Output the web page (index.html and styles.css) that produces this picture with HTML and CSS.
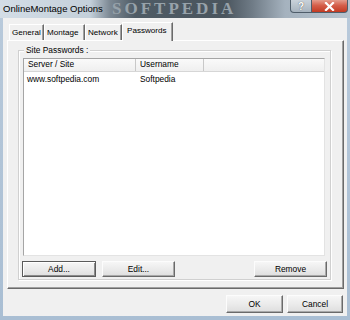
FILE: index.html
```html
<!DOCTYPE html>
<html>
<head>
<meta charset="utf-8">
<title>OnlineMontage Options</title>
<link rel="stylesheet" href="styles.css">
</head>
<body>
<div class="window">
  <div class="titlebar">
    <span class="title">OnlineMontage Options</span>
    <span class="wm-title">SOFTPEDIA</span>
    <div class="caption-btns">
      <div class="cap help">?</div>
      <div class="cap close">
        <svg width="11" height="9" viewBox="0 0 11 9"><path d="M2 1 L9 8 M9 1 L2 8" stroke="#fff" stroke-width="2.2" stroke-linecap="square"/></svg>
      </div>
    </div>
  </div>
  <div class="client">
    <div class="tabctrl">
      <div class="tabstrip">
        <div class="tab t-general">General</div>
        <div class="tab t-montage">Montage</div>
        <div class="tab t-network">Network</div>
        <div class="tab active">Passwords</div>
      </div>
      <div class="pane">
        <div class="group">
          <div class="legend">Site Passwords :</div>
          <div class="list">
            <div class="lrow header">
              <div class="col c1">Server / Site</div>
              <div class="col c2">Username</div>
              <div class="col c3"></div>
            </div>
            <div class="lrow item">
              <div class="col c1">www.softpedia.com</div>
              <div class="col c2">Softpedia</div>
            </div>
          </div>
          <div class="btnrow">
            <div class="btn default w-add">Add...</div>
            <div class="btn w-edit">Edit...</div>
            <div class="spacer"></div>
            <div class="btn w-remove">Remove</div>
          </div>
        </div>
      </div>
    </div>
    <div class="footer">
      <div class="btn w-ok">OK</div>
      <div class="btn w-cancel">Cancel</div>
    </div>
  </div>
</div>
</body>
</html>
```

FILE: styles.css
```css
html, body {
  margin: 0;
  padding: 0;
  background: #a8bcd2;
}
.window {
  width: 350px;
  height: 320px;
  position: relative;
  overflow: hidden;
  font-family: "Liberation Sans", Arial, sans-serif;
  font-size: 8.4px;
  color: #000;
  background: linear-gradient(to bottom, #b9cadb 0%, #a9bed3 100%);
}
.titlebar {
  height: 18px;
  position: relative;
  overflow: hidden;
  background: linear-gradient(to right, #d3dde6 0px, #c4d0da 90px, #7c8893 110px, #4f5b65 135px, #4a555e 225px, #6f7b86 252px, #a5b2be 285px, #b7c4cf 350px);
  display: flex;
  align-items: center;
}
.title {
  font-size: 9.5px;
  padding-left: 3px;
  margin-top: -1px;
  color: #000;
  position: relative;
  z-index: 2;
}
.wm-title {
  position: absolute;
  left: 112px;
  top: 0;
  line-height: 17px;
  font-family: "Liberation Serif", serif;
  font-weight: bold;
  font-size: 17px;
  letter-spacing: 3px;
  color: #97a2aa;
}
.caption-btns {
  position: absolute;
  right: 2px;
  top: 0;
  display: flex;
}
.cap {
  height: 13px;
  border: 1px solid #4f5d6a;
  border-top: none;
  box-sizing: border-box;
  display: flex;
  align-items: center;
  justify-content: center;
}
.help {
  width: 22px;
  border-radius: 0 0 0 4px;
  background: linear-gradient(to bottom, #c9d2da, #a7b3be);
  color: #fff;
  font-weight: bold;
  font-size: 10px;
  text-shadow: 0 0 1px #333;
}
.close {
  width: 36px;
  border-left: none;
  border-radius: 0 0 4px 0;
  background: linear-gradient(to bottom, #e49c8c 0%, #d55f4a 45%, #c23a22 100%);
}
.client {
  margin: 0 3px;
  height: 298px;
  background: #f0f0f0;
  padding: 4px 3px 0 4px;
  box-sizing: border-box;
  display: flex;
  flex-direction: column;
}
.tabctrl {
  display: flex;
  flex-direction: column;
}
.tabstrip {
  height: 18px;
  display: flex;
  align-items: flex-end;
  padding-left: 2px;
  position: relative;
  z-index: 2;
}
.tab {
  height: 16px;
  box-sizing: border-box;
  border-left: 1px solid #fff;
  border-top: 1px solid #fff;
  border-right: 1px solid #6a6a6a;
  box-shadow: inset -1px 0 0 #a0a0a0;
  padding: 3px 0 0 2px;
  font-size: 8.1px;
  white-space: nowrap;
}
.t-general { width: 35px; }
.t-montage { width: 41px; }
.t-network { width: 37px; }
.tab.active {
  width: 51px;
  height: 19px;
  margin-bottom: -1px;
  background: #f0f0f0;
  padding-top: 3px;
  padding-left: 4px;
}
.pane {
  height: 249px;
  box-sizing: border-box;
  border-top: 1px solid #fff;
  border-left: 1px solid #fff;
  border-right: 1px solid #6a6a6a;
  border-bottom: 1px solid #6a6a6a;
  box-shadow: inset -1px -1px 0 #a0a0a0;
  padding: 9px 0 0 10px;
}
.group {
  width: 313px;
  height: 230px;
  box-sizing: border-box;
  border: 1px solid #d0d0d0;
  box-shadow: inset 1px 1px 0 #fff, 1px 1px 0 #fff;
  padding: 0 0 0 4px;
  display: flex;
  flex-direction: column;
}
.legend {
  align-self: flex-start;
  margin: -6px 0 0 1px;
  padding: 0 2px;
  background: #f0f0f0;
  line-height: 10px;
  height: 10px;
}
.list {
  margin-top: 3px;
  width: 302px;
  height: 198px;
  box-sizing: border-box;
  background: #fff;
  border: 1px solid #a5a5a5;
  border-right-color: #e3e3e3;
  border-bottom-color: #e3e3e3;
}
.lrow {
  display: flex;
  height: 12px;
  line-height: 12px;
}
.header {
  background: linear-gradient(to bottom, #fafafa, #efefef);
  border-bottom: 1px solid #d6d6d6;
  height: 12px;
  line-height: 11px;
}
.col {
  box-sizing: border-box;
  padding-left: 4px;
  white-space: nowrap;
}
.header .col { border-right: 1px solid #c8c8c8; }
.c1 { width: 112px; }
.c2 { width: 68px; }
.c3 { flex: 1; border-right: none !important; }
.item { margin-top: 1px; }
.item .c1 { padding-left: 3px; }
.btnrow {
  display: flex;
  margin: 5px 0 0 -1px;
  gap: 6px;
  width: 305px;
}
.spacer { flex: 1; }
.btn {
  height: 16px;
  box-sizing: border-box;
  background: linear-gradient(to bottom, #f6f6f6 0%, #ebebeb 50%, #dedede 100%);
  border: 1px solid;
  border-color: #fcfcfc #6a6a6a #6a6a6a #fcfcfc;
  box-shadow: inset -1px -1px 0 #a9a9a9;
  display: flex;
  align-items: center;
  justify-content: center;
  font-size: 8.4px;
}
.btn.default {
  border-color: #5a5a5a;
  box-shadow: inset 1px 1px 0 #fff, inset -1px -1px 0 #8a8a8a;
}
.w-add { width: 74px; }
.w-edit { width: 73px; }
.w-remove { width: 73px; }
.footer {
  display: flex;
  justify-content: flex-end;
  gap: 4px;
  margin-top: 6px;
  padding-right: 1px;
}
.w-ok { width: 57px; height: 18px; }
.w-cancel { width: 56px; height: 18px; }
```
